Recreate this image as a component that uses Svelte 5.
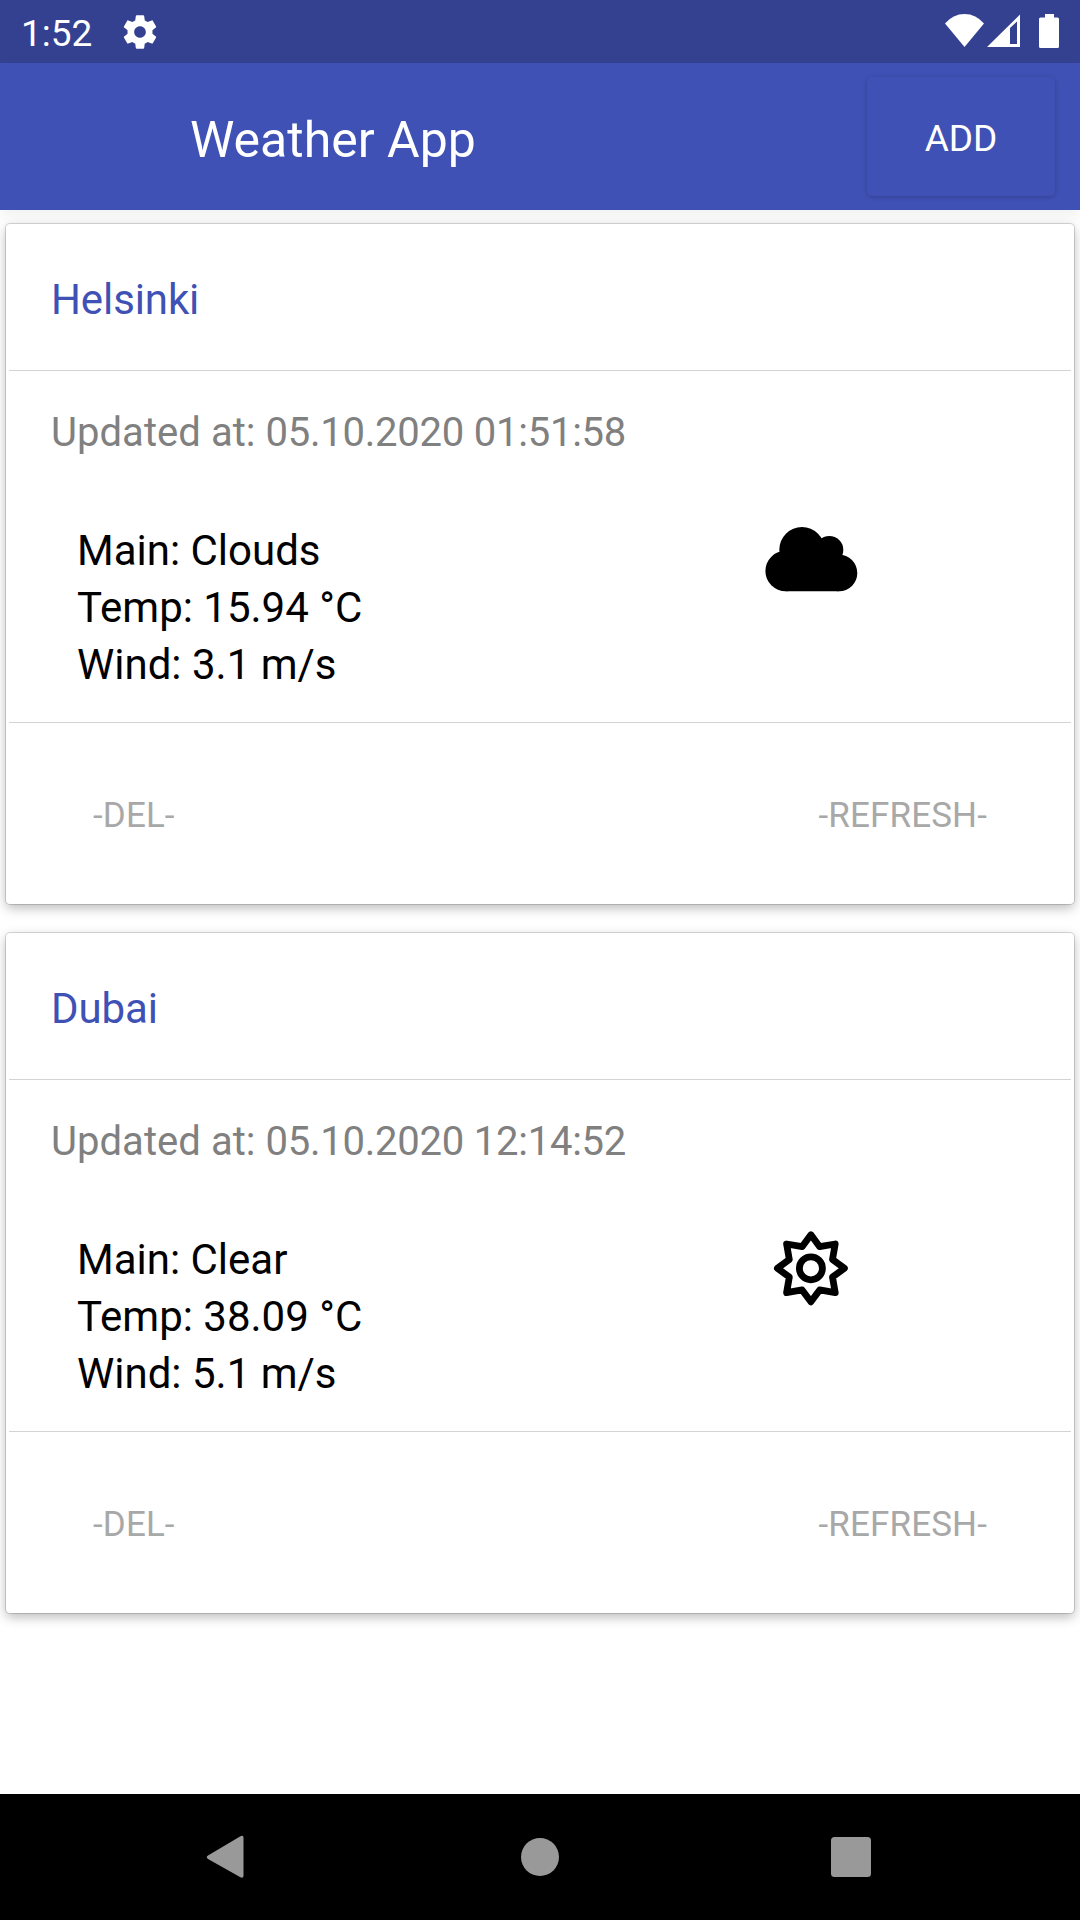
<script>
  const cities = [
    { name: 'Helsinki', updated: '05.10.2020 01:51:58', main: 'Clouds', temp: '15.94', wind: '3.1' },
    { name: 'Dubai', updated: '05.10.2020 12:14:52', main: 'Clear', temp: '38.09', wind: '5.1' }
  ];
</script>

<div class="screen">
  <div class="status">
    <span class="time">1:52</span>
    <svg class="gear" viewBox="0 0 24 24" width="40" height="40"><path fill="#fff" d="M19.43 12.98c.04-.32.07-.64.07-.98s-.03-.66-.07-.98l2.11-1.65c.19-.15.24-.42.12-.64l-2-3.46c-.12-.22-.39-.3-.61-.22l-2.49 1c-.52-.4-1.08-.73-1.69-.98l-.38-2.65C14.46 2.18 14.25 2 14 2h-4c-.25 0-.46.18-.49.42l-.38 2.65c-.61.25-1.17.59-1.69.98l-2.49-1c-.23-.09-.49 0-.61.22l-2 3.46c-.13.22-.07.49.12.64l2.11 1.65c-.04.32-.07.65-.07.98s.03.66.07.98l-2.11 1.65c-.19.15-.24.42-.12.64l2 3.46c.12.22.39.3.61.22l2.49-1c.52.4 1.08.73 1.69.98l.38 2.65c.03.24.24.42.49.42h4c.25 0 .46-.18.49-.42l.38-2.65c.61-.25 1.17-.59 1.69-.98l2.49 1c.23.09.49 0 .61-.22l2-3.46c.12-.22.07-.49-.12-.64l-2.11-1.65zM12 15.5c-1.93 0-3.5-1.57-3.5-3.5s1.570-3.5 3.500-3.500 3.500 1.570 3.500 3.500-1.570 3.500-3.500 3.500z"/></svg>
    <svg class="signals" viewBox="0 0 116 36" width="116" height="36">
      <g fill="#fff">
        <path d="M0 9.500Q8 0 19.500 0T39 9.500L19.500 33Z"/>
        <path fill-rule="evenodd" d="M42 33L75 0.500V33ZM65 14V30H72V7.500Z"/>
        <path d="M100 0h9v3.500h3.500q1.500 0 1.500 1.500v27.500q0 1.500-1.500 1.500h-17q-1.500 0-1.500-1.500v-27.500q0-1.500 1.500-1.500h4.500z"/>
      </g>
    </svg>
  </div>

  <header>
    <h1>Weather App</h1>
    <button class="add">ADD</button>
  </header>

  <main>
    {#each cities as city}
      <article>
        <h2>{city.name}</h2>
        <section>
          <p class="updated">Updated at: <time>{city.updated}</time></p>
          <div class="weather">
            <p>Main: {city.main}<br />Temp: {city.temp} °C<br />Wind: {city.wind} m/s</p>
            <svg viewBox="0 0 100 80" width="100" height="80">
              {#if city.main === 'Clouds'}
                <circle cx="41" cy="27.700" r="22.700"/>
                <circle cx="68.300" cy="28" r="14"/>
                <circle cx="24.700" cy="49" r="20.300"/>
                <circle cx="78" cy="51" r="18.300"/>
                <path d="M24.700 36H78V69.300H24.700Z"/>
              {:else}
                <g transform="translate(49.900 37.300)" fill="none" stroke="#000" stroke-width="6.800" stroke-linejoin="round">
                  <path d="M0-33.500L8.800-21.600L24.300-24.300L21.600-8.800L33.500 0L21.600 8.800L24.300 24.300L8.800 21.600L0 33.500L-8.800 21.600L-24.300 24.300L-21.600 8.800L-33.500 0L-21.600-8.800L-24.300-24.300L-8.800-21.600Z"/>
                  <circle r="11.500"/>
                </g>
              {/if}
            </svg>
          </div>
        </section>
        <footer><button>-DEL-</button><button>-REFRESH-</button></footer>
      </article>
    {/each}
  </main>

  <nav>
    <svg viewBox="0 0 1080 126" width="1080" height="126">
      <g fill="#999">
        <path d="M208 61.500L240 42.500Q243.500 40.500 243.500 44V81.500Q243.500 85 240 83L208 65Q205.500 63 208 61.500Z"/>
        <circle cx="540" cy="63" r="19"/>
        <rect x="831" y="43" width="40" height="40" rx="3.500"/>
      </g>
    </svg>
  </nav>
</div>

<style>
  :global(body) { margin: 0; background: #fff; }
  .screen { width: 1080px; height: 1920px; display: flex; flex-direction: column; overflow: hidden; background: #fff; font-family: Roboto, sans-serif; }
  h1, h2, p { margin: 0; font-weight: 400; }
  button { border: 0; padding: 0; background: none; font: inherit; }
  .status { height: 63px; flex: none; display: flex; align-items: center; padding: 0 19px 0 21px; background: #334190; color: #fff; box-sizing: border-box; }
  .time { font-size: 37px; line-height: 43px; margin-top: 3px; }
  .gear { margin-left: 28px; }
  .signals { margin-left: auto; margin-top: 1px; }
  header { height: 147px; flex: none; display: flex; align-items: center; justify-content: space-between; box-sizing: border-box; padding: 0 25px 0 190px; background: #3f51b5; color: #fff; box-shadow: 0 8px 12px rgba(0, 0, 0, 0.05); }
  h1 { font-size: 50px; line-height: 60px; padding-top: 7px; }
  .add { width: 188px; height: 119px; padding-top: 3px; border-radius: 5px; font-size: 37px; color: #fff; box-shadow: 0 1px 5px rgba(0, 0, 0, 0.2); }
  main { flex: 1; display: flex; flex-direction: column; gap: 29px; padding: 14px 6px 0; }
  article { height: 680px; box-sizing: border-box; background: #fff; border-radius: 4px; box-shadow: 0 0 0 1px rgba(0, 0, 0, 0.14), 0 4px 12px rgba(0, 0, 0, 0.28); padding: 0 3px; }
  h2 { height: 147px; box-sizing: border-box; padding: 48px 42px 0; font-size: 42px; line-height: 56px; letter-spacing: -0.1px; color: #3f51b5; border-bottom: 1px solid #d3d3d3; }
  section { height: 352px; box-sizing: border-box; border-bottom: 1px solid #d3d3d3; padding: 35px 42px 0; }
  .updated { font-size: 40px; line-height: 54px; letter-spacing: 0.05px; color: #808080; }
  .updated time { letter-spacing: -0.24px; }
  .weather { display: flex; justify-content: space-between; padding: 62px 168px 0 26px; font-size: 42px; line-height: 57px; }
  footer { height: 181px; display: flex; justify-content: space-between; align-items: center; padding: 4px 84px 0; box-sizing: border-box; font-size: 35px; letter-spacing: 0.12px; color: #a8a8a8; }
  footer button { color: inherit; letter-spacing: inherit; }
  nav { height: 126px; flex: none; background: #000; }
  nav svg { display: block; }
</style>
